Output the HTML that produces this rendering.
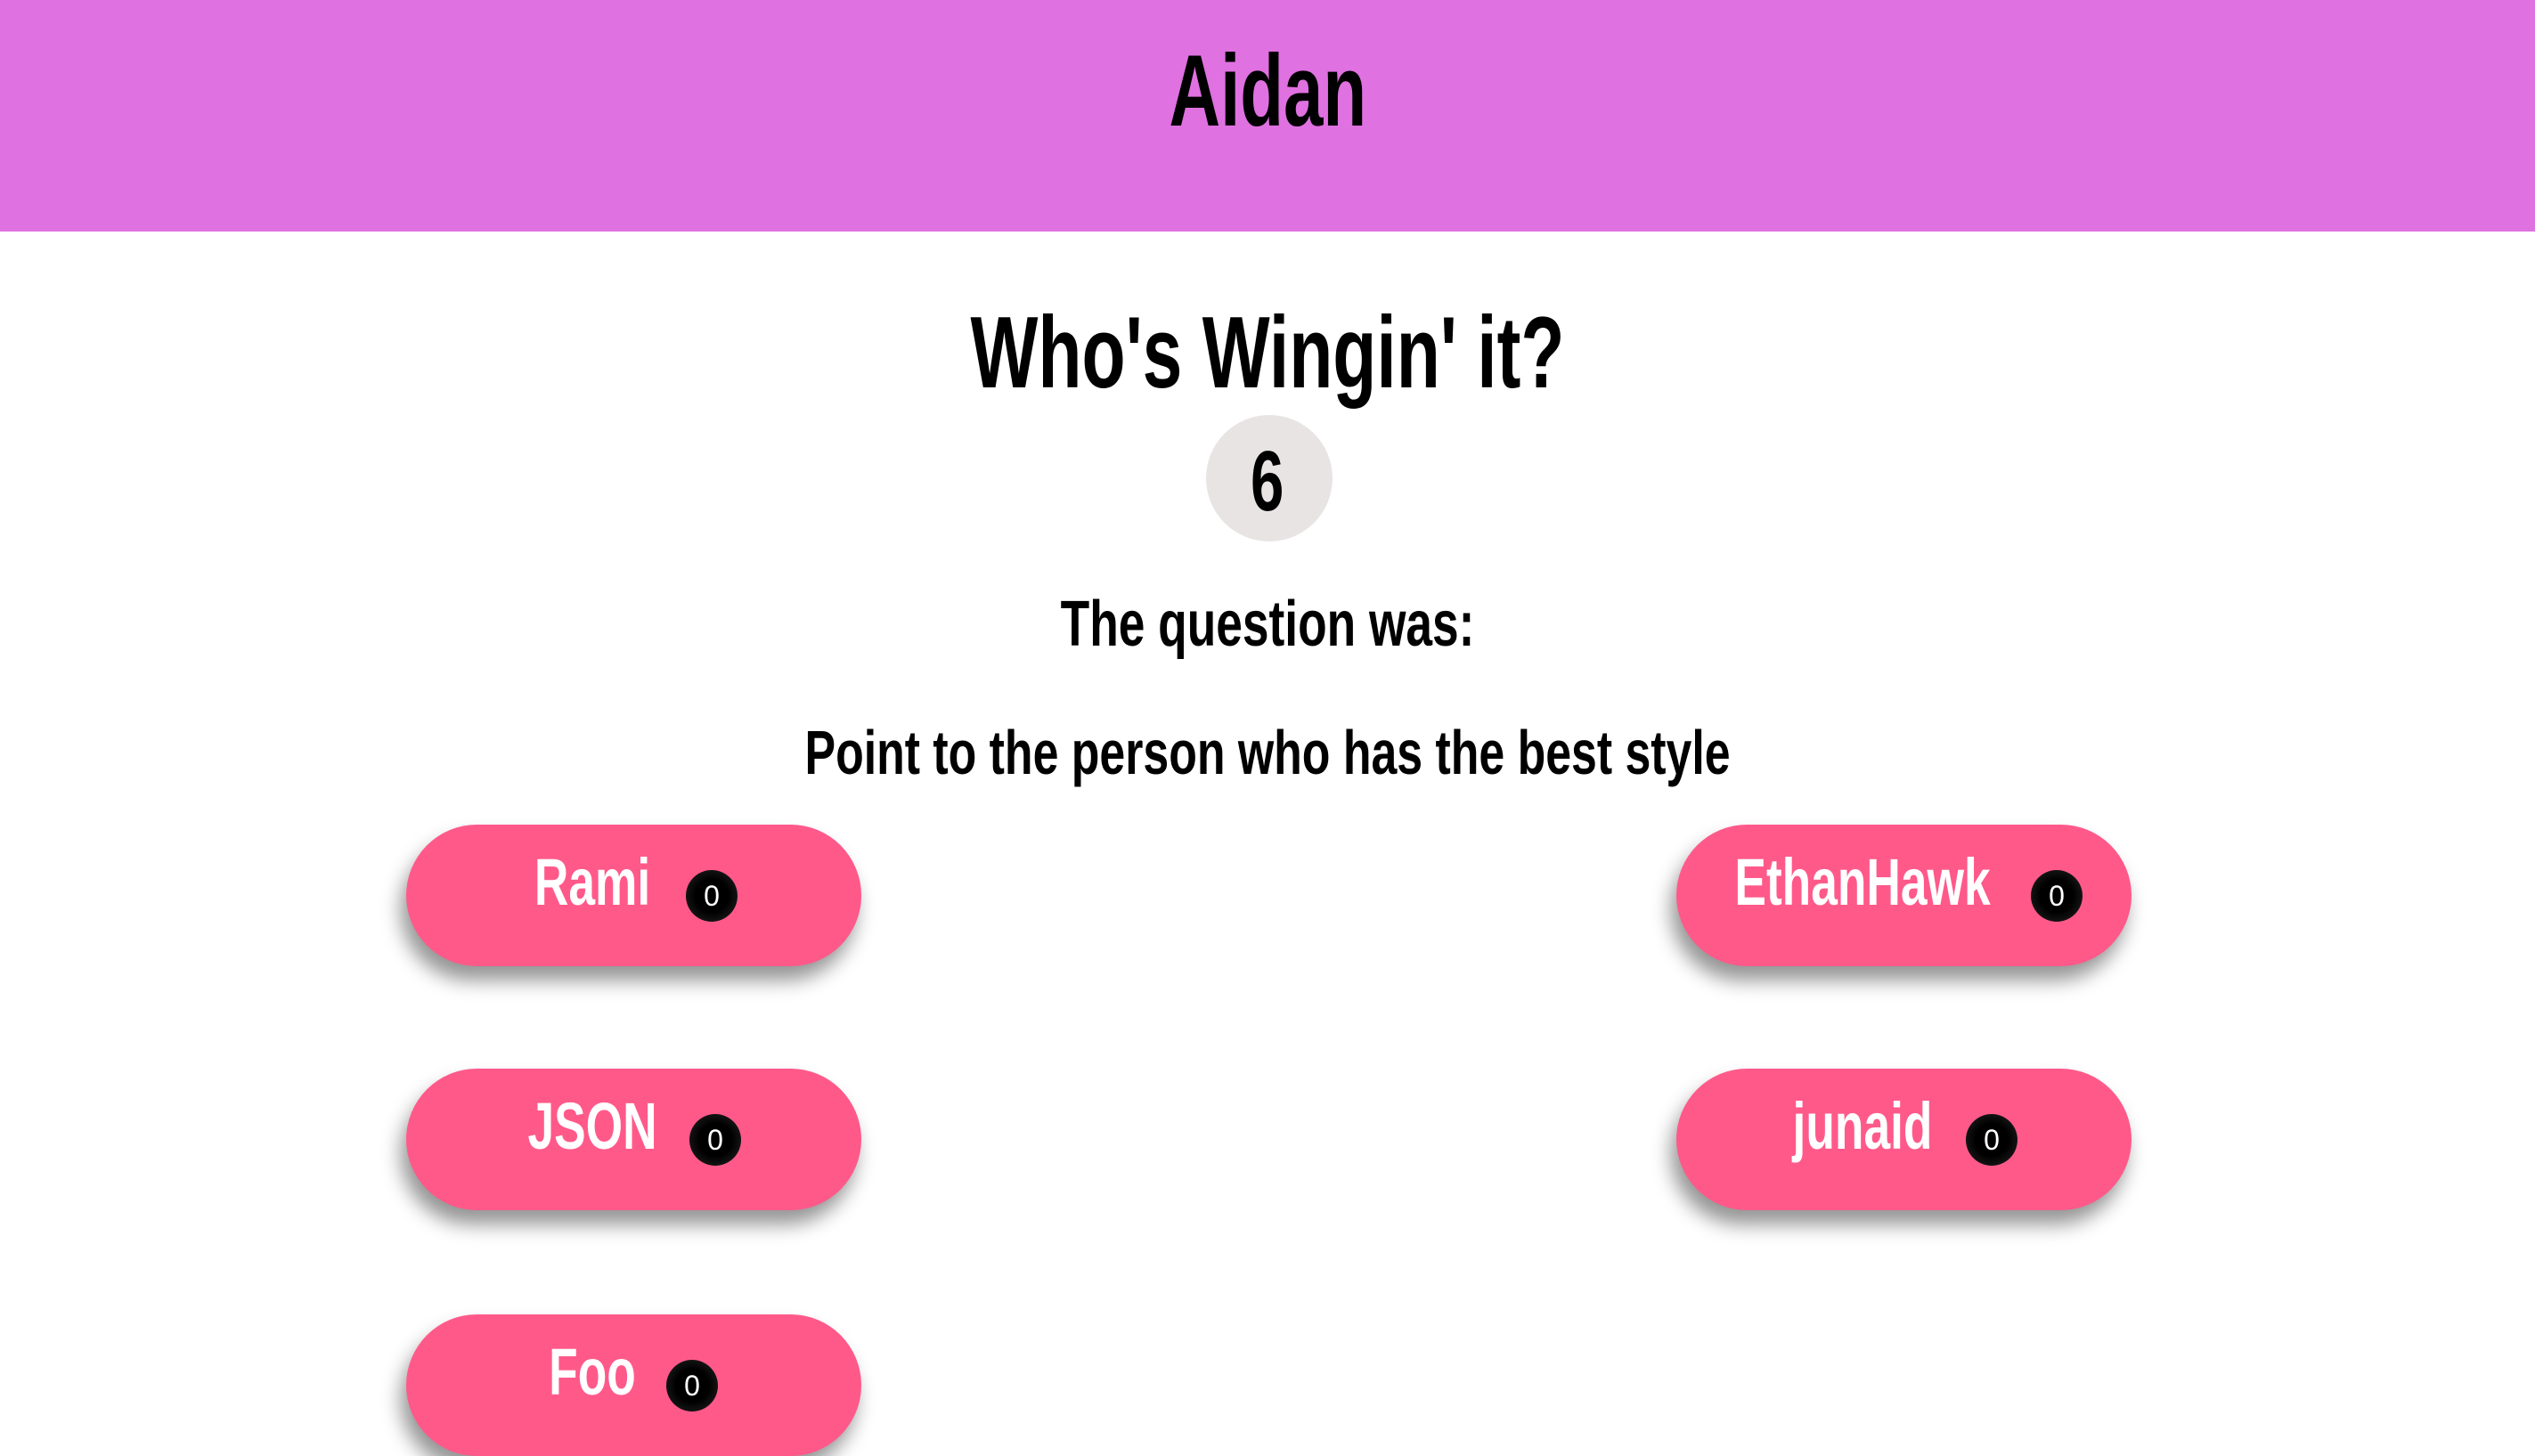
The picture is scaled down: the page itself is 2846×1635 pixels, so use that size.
<!DOCTYPE html>
<html><head><meta charset="utf-8"><style>
html,body{margin:0;padding:0;width:2846px;height:1634px;overflow:hidden;background:#fff;font-family:"Liberation Sans",sans-serif;}
.hdr{position:absolute;left:0;top:0;width:2846px;height:260px;background:#df71e1;}
.c{position:absolute;left:0;width:2846px;text-align:center;font-weight:bold;color:#000;white-space:nowrap;line-height:1;}
.c span{display:inline-block;transform:scaleX(0.7);}
.circ{position:absolute;left:1354px;top:466px;width:142px;height:142px;border-radius:50%;background:#e8e4e4;}
.btn{position:absolute;width:511px;height:159px;border-radius:80px;background:#ff598a;box-shadow:-6px 16px 22px rgba(0,0,0,.42);}
.btn .t{position:absolute;left:209px;top:28px;color:#fff;font-weight:bold;font-size:74px;line-height:1;white-space:nowrap;transform:translateX(-50%) scaleX(0.72);}
.b{position:absolute;top:51px;width:58px;height:58px;margin-left:-29px;border-radius:50%;background:radial-gradient(circle at 50% 50%,#000 45%,#2a2a2a 100%);color:#fff;font-size:32px;display:flex;align-items:center;justify-content:center;}
</style></head><body>
<div class="hdr"></div>
<div class="c" style="top:46px;font-size:114px;"><span>Aidan</span></div>
<div class="c" style="top:340px;font-size:114px;"><span style="transform:scaleX(0.705)">Who's Wingin' it?</span></div>
<div class="circ"></div>
<div class="c" style="top:493px;font-size:96px;"><span>6</span></div>
<div class="c" style="top:665px;font-size:72px;"><span style="transform:scaleX(0.74)">The question was:</span></div>
<div class="c" style="top:810px;font-size:70px;"><span style="transform:scaleX(0.74)">Point to the person who has the best style</span></div>

<div class="btn" style="left:456px;top:926px;"><span class="t">Rami</span><span class="b" style="left:343px">0</span></div>
<div class="btn" style="left:1882px;top:926px;"><span class="t">EthanHawk</span><span class="b" style="left:427px">0</span></div>
<div class="btn" style="left:456px;top:1200px;"><span class="t">JSON</span><span class="b" style="left:347px">0</span></div>
<div class="btn" style="left:1882px;top:1200px;"><span class="t">junaid</span><span class="b" style="left:354px">0</span></div>
<div class="btn" style="left:456px;top:1476px;"><span class="t">Foo</span><span class="b" style="left:321px">0</span></div>
</body></html>
